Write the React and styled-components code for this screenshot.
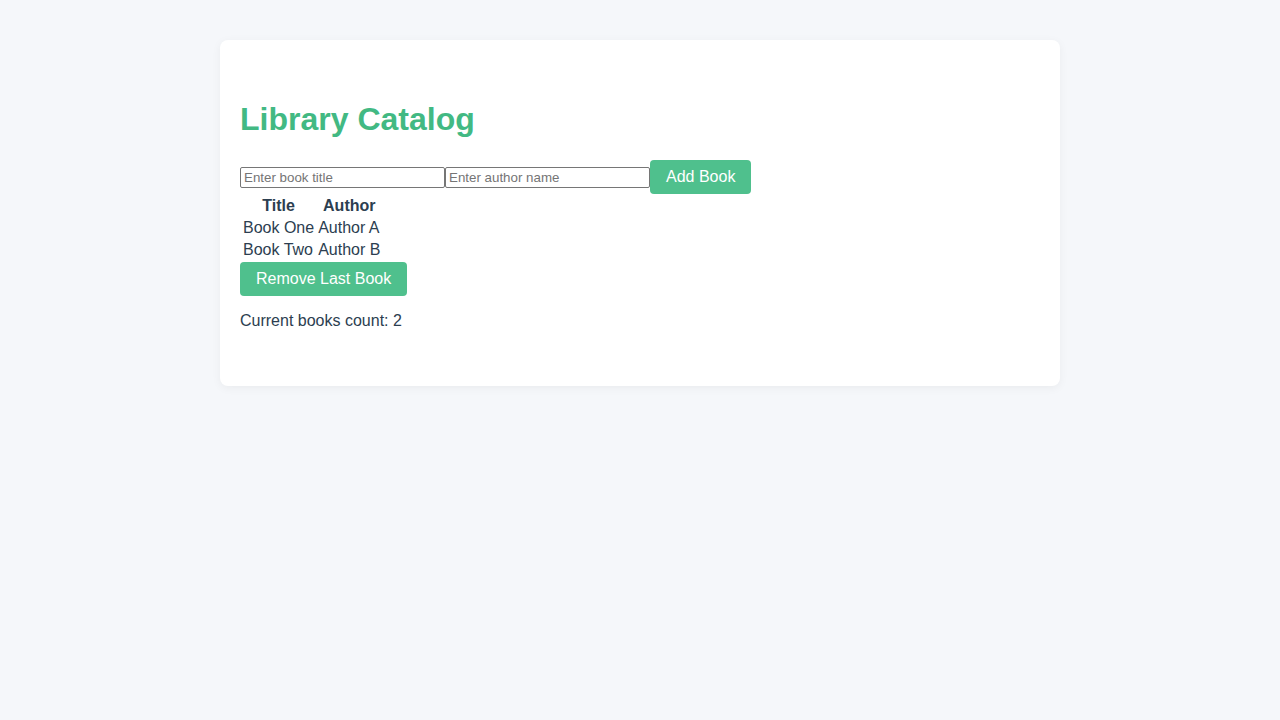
import React, { useState } from 'react';
import styled, { createGlobalStyle } from 'styled-components';

const GlobalStyle = createGlobalStyle`
  body {
    margin: 0;
    background: #f5f7fa;
    font-family: "Liberation Sans", Arial, sans-serif;
    color: #2c3e50;
  }
`;

const Card = styled.div`
  max-width: 800px;
  margin: 40px auto;
  padding: 40px 20px;
  background: #fff;
  border-radius: 8px;
  box-shadow: 0 2px 10px rgba(0, 0, 0, 0.05);
`;

const Title = styled.h1`
  color: #42b983;
  font-size: 32px;
  margin: 21px 0 22px;
`;

const Form = styled.div`
  display: flex;
  align-items: center;
`;

const Input = styled.input`
  width: 205px;
  height: 21px;
  box-sizing: border-box;
  font-family: "Liberation Sans", Arial, sans-serif;
  font-size: 13.33px;
  padding: 1px 3px;
  border: 1px solid #767676;
  border-radius: 2px;
  margin: 0;
  &::placeholder {
    color: #757575;
  }
`;

const Button = styled.button`
  background: #4fc08d;
  color: #fff;
  border: none;
  border-radius: 4px;
  padding: 8px 16px;
  font-family: "Liberation Sans", Arial, sans-serif;
  font-size: 16px;
  line-height: 18px;
  cursor: pointer;
`;

const Table = styled.table`
  color: #2c3e50;
  font-size: 16px;
  line-height: 18px;
  th, td {
    padding: 1px;
  }
`;

const Count = styled.p`
  margin: 16px 0;
  line-height: 18px;
`;

export default function App() {
  const [books, setBooks] = useState([
    { title: 'Book One', author: 'Author A' },
    { title: 'Book Two', author: 'Author B' },
  ]);
  const [title, setTitle] = useState('');
  const [author, setAuthor] = useState('');

  const addBook = () => {
    if (!title || !author) return;
    setBooks([...books, { title, author }]);
    setTitle('');
    setAuthor('');
  };

  return (
    <>
      <GlobalStyle />
      <Card>
        <Title>Library Catalog</Title>
        <Form>
          <Input placeholder="Enter book title" value={title} onChange={(e) => setTitle(e.target.value)} />
          <Input placeholder="Enter author name" value={author} onChange={(e) => setAuthor(e.target.value)} />
          <Button onClick={addBook}>Add Book</Button>
        </Form>
        <Table>
          <thead>
            <tr>
              <th>Title</th>
              <th>Author</th>
            </tr>
          </thead>
          <tbody>
            {books.map((b, i) => (
              <tr key={i}>
                <td>{b.title}</td>
                <td>{b.author}</td>
              </tr>
            ))}
          </tbody>
        </Table>
        <Button onClick={() => setBooks(books.slice(0, -1))}>Remove Last Book</Button>
        <Count>Current books count: {books.length}</Count>
      </Card>
    </>
  );
}
